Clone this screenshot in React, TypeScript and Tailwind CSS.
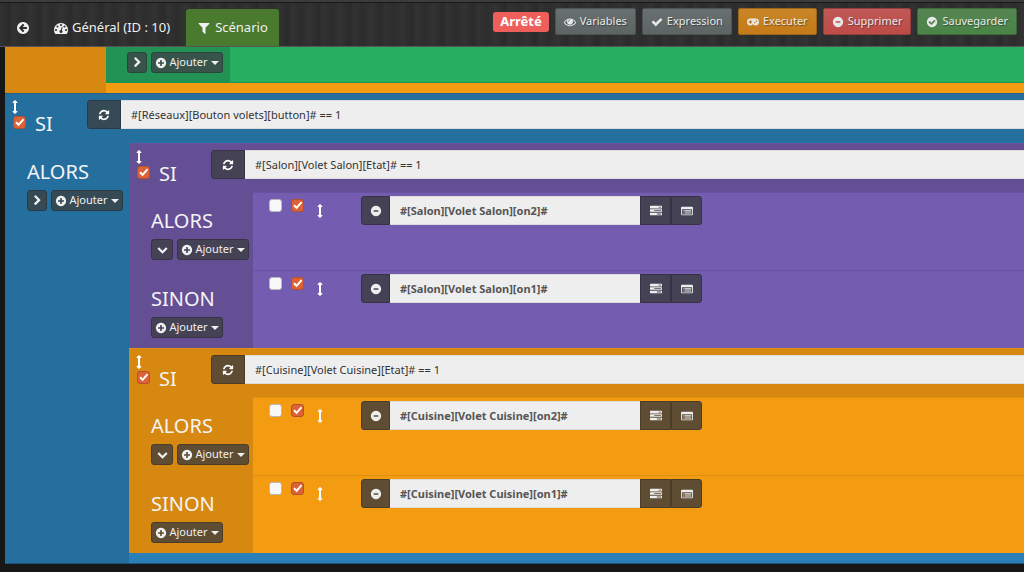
import React from 'react';

const DISC =
  'M1664 896q0 209-103 385.5t-279.5 279.5-385.5 103-385.5-103-279.5-279.5-103-385.5 103-385.5 279.5-279.5 385.5-103 385.5 103 279.5 279.5 103 385.5z';

const PATHS = {
  back: 'M1408 960v-128q0-26-19-45t-45-19h-502l189-189q19-19 19-45t-19-45l-91-91q-18-18-45-18t-45 18l-362 362-91 91q-18 18-18 45t18 45l91 91 362 362q18 18 45 18t45-18l91-91q18-18 18-45t-18-45l-189-189h502q26 0 45-19t19-45z' + DISC,
  plus: 'M1344 960v-128q0-26-19-45t-45-19h-256v-256q0-26-19-45t-45-19h-128q-26 0-45 19t-19 45v256h-256q-26 0-45 19t-19 45v128q0 26 19 45t45 19h256v256q0 26 19 45t45 19h128q26 0 45-19t19-45v-256h256q26 0 45-19t19-45z' + DISC,
  minus: 'M1248 960v-128q0-26-19-45t-45-19h-576q-26 0-45 19t-19 45v128q0 26 19 45t45 19h576q26 0 45-19t19-45z' + DISC,
  ok: 'M1412 734q0-28-18-46l-91-90q-19-19-45-19t-45 19l-408 407-226-226q-19-19-45-19t-45 19l-91 90q-18 18-18 46 0 27 18 45l362 362q19 19 45 19 27 0 46-19l543-543q18-18 18-45z' + DISC,
  right: 'M1363 877l-742 742q-19 19-45 19t-45-19l-166-166q-19-19-19-45t19-45l531-531-531-531q-19-19-19-45t19-45l166-166q19-19 45-19t45 19l742 742q19 19 19 45t-19 45z',
  down: 'M1683 808l-742 741q-19 19-45 19t-45-19l-742-741q-19-19-19-45.5t19-45.5l166-165q19-19 45-19t45 19l531 531 531-531q19-19 45-19t45 19l166 165q19 19 19 45.5t-19 45.5z',
  filter: 'M1595 295q17 41-14 70l-493 493v742q0 42-39 59-13 5-25 5-27 0-45-19l-256-256q-19-19-19-45v-486l-493-493q-31-29-14-70 17-39 59-39h1280q42 0 59 39z',
  eye: 'M1664 960q-152-236-381-353 61 104 61 225 0 185-131.5 316.5t-316.5 131.5-316.5-131.5-131.5-316.5q0-121 61-225-229 117-381 353 133 205 333.5 326.5t434.5 121.5 434.5-121.5 333.5-326.5zm-720-384q0-20-14-34t-34-14q-125 0-214.5 89.5t-89.5 214.5q0 20 14 34t34 14 34-14 14-34q0-86 61-147t147-61q20 0 34-14t14-34zm848 384q0 34-20 69-140 230-376.5 368.5t-499.5 138.5-499.5-139-376.5-368q-20-35-20-69t20-69q140-229 376.5-368t499.5-139 499.5 139 376.5 368q20 35 20 69z',
  check: 'M1671 566q0 40-28 68l-724 724-136 136q-28 28-68 28t-68-28l-136-136-362-362q-28-28-28-68t28-68l136-136q28-28 68-28t68 28l294 295 656-657q28-28 68-28t68 28l136 136q28 28 28 68z',
  gauge: 'M384 1152q0-53-37.5-90.5t-90.5-37.5-90.5 37.5-37.5 90.5 37.5 90.5 90.5 37.5 90.5-37.5 37.5-90.5zm192-448q0-53-37.5-90.5t-90.5-37.5-90.5 37.5-37.5 90.5 37.5 90.5 90.5 37.5 90.5-37.5 37.5-90.5zm428 481l101-382q6-26-7.5-48.5t-38.5-29.5-48 6.5-30 39.5l-101 382q-60 5-107 43.5t-63 98.5q-20 77 20 146t117 89 146-20 89-117q16-60-6-117t-72-91zm660-33q0-53-37.5-90.5t-90.5-37.5-90.5 37.5-37.5 90.5 37.5 90.5 90.5 37.5 90.5-37.5 37.5-90.5zm-640-640q0-53-37.5-90.5t-90.5-37.5-90.5 37.5-37.5 90.5 37.5 90.5 90.5 37.5 90.5-37.5 37.5-90.5zm448 192q0-53-37.5-90.5t-90.5-37.5-90.5 37.5-37.5 90.5 37.5 90.5 90.5 37.5 90.5-37.5 37.5-90.5zm320 448q0 261-141 483-19 29-54 29h-1402q-35 0-54-29-141-221-141-483 0-182 71-348t191-286 286-191 348-71 348 71 286 191 191 286 71 348z',
  pad: 'M512 384H1280a512 512 0 0 1 0 1024q-190 0-330-128H842q-140 128-330 128a512 512 0 0 1 0-1024zM416 640v160H256v192h160v160h192V992h160V800H608V640zM1160 880a120 120 0 1 0 0 240 120 120 0 1 0 0-240zM1400 640a120 120 0 1 0 0 240 120 120 0 1 0 0-240z',
  refresh: 'M1639 1056q0 5-1 7-64 268-268 434.5t-478 166.5q-146 0-282.5-55t-243.5-157l-129 129q-19 19-45 19t-45-19-19-45v-448q0-26 19-45t45-19h448q26 0 45 19t19 45-19 45l-137 137q71 66 161 102t187 36q134 0 250-65t186-179q11-17 53-117 8-23 30-23h192q13 0 22.5 9.5t9.5 22.5zm25-800v448q0 26-19 45t-45 19h-448q-26 0-45-19t-19-45 19-45l138-138q-148-137-349-137-134 0-250 65t-186 179q-11 17-53 117-8 23-30 23h-199q-13 0-22.5-9.5t-9.5-22.5v-7q65-268 270-434.5t480-166.5q146 0 284 55.5t245 156.5l130-129q19-19 45-19t45 19 19 45z',
  move: 'M1216 320q0 26-19 45t-45 19h-128v1024h128q26 0 45 19t19 45-19 45l-256 256q-19 19-45 19t-45-19l-256-256q-19-19-19-45t19-45 45-19h128v-1024h-128q-26 0-45-19t-19-45 19-45l256-256q19-19 45-19t45 19l256 256q19 19 19 45z',
  tasks: 'M1024 1408h640v-128h-640v128zm-384-512h1024v-128h-1024v128zm640-512h384v-128h-384v128zm512 832v256q0 26-19 45t-45 19h-1664q-26 0-45-19t-19-45v-256q0-26 19-45t45-19h1664q26 0 45 19t19 45zm0-512v256q0 26-19 45t-45 19h-1664q-26 0-45-19t-19-45v-256q0-26 19-45t45-19h1664q26 0 45 19t19 45zm0-512v256q0 26-19 45t-45 19h-1664q-26 0-45-19t-19-45v-256q0-26 19-45t45-19h1664q26 0 45 19t19 45z',
  list: 'M160 256H1632q160 0 160 160V1376q0 160-160 160H160Q0 1536 0 1376V416Q0 256 160 256zM128 640V1376q0 32 32 32H1632q32 0 32-32V640zM256 768H384V896H256zM512 768H1536V896H512zM256 960H384V1088H256zM512 960H1536V1088H512zM256 1152H384V1280H256zM512 1152H1536V1280H512z',
};

function Icon({ name, className = 'size-3' }: { name: keyof typeof PATHS; className?: string }) {
  return (
    <svg viewBox="0 0 1792 1792" fill="currentColor" fillRule="evenodd" aria-hidden="true" className={`shrink-0 ${className}`}>
      <path d={PATHS[name]} />
    </svg>
  );
}

type Theme = { dark: string; bright: string; button: string; line: string };

const GREEN: Theme = { dark: 'bg-[#239355]', bright: 'bg-[#27ae60]', button: 'bg-[#37534a] border-[#2a453b]', line: 'border-[#239355]' };
const BLUE: Theme = { dark: 'bg-[#256f9f]', bright: 'bg-[#2980b9]', button: 'bg-[#364a56] border-[#293a45]', line: 'border-[#215f88]' };
const PURPLE: Theme = { dark: 'bg-[#644f94]', bright: 'bg-[#745cb0]', button: 'bg-[#464256] border-[#373344]', line: 'border-[#6853a0]' };
const ORANGE: Theme = { dark: 'bg-[#d68811]', bright: 'bg-[#f39c12]', button: 'bg-[#5e4d33] border-[#4a3c27]', line: 'border-[#e08f11]' };

function Tick({ label, checked = false }: { label: string; checked?: boolean }) {
  return (
    <span className="grid size-[13px] shrink-0">
      <input
        type="checkbox"
        aria-label={label}
        defaultChecked={checked}
        className="peer col-start-1 row-start-1 size-[13px] appearance-none rounded-[3px] border border-[#b9b9b9] bg-[#f8f8f8] checked:border-[#b5502c] checked:bg-[#dd6336]"
      />
      <svg viewBox="0 0 13 13" className="pointer-events-none col-start-1 row-start-1 hidden size-[13px] peer-checked:block" fill="none" stroke="#fff" strokeWidth="2">
        <path d="M3 6.2 5.6 8.8 10.6 3.2" />
      </svg>
    </span>
  );
}

function AddBar({ theme, chevron }: { theme: Theme; chevron?: 'right' | 'down' }) {
  return (
    <div className="flex gap-1 text-[11px] text-[#f0f0f0]">
      {chevron && (
        <button
          type="button"
          aria-label="Replier"
          className={`flex h-[21px] items-center justify-center rounded-[3px] border ${chevron === 'down' ? 'w-[22px]' : 'w-5'} ${theme.button}`}
        >
          <Icon name={chevron} className="size-[11px]" />
        </button>
      )}
      <button type="button" className={`flex h-[21px] w-[72px] items-center justify-center gap-[2px] rounded-[3px] border ${theme.button}`}>
        <Icon name="plus" />
        <span>Ajouter</span>
        <svg viewBox="0 0 8 4" className="ml-[1px] h-1 w-2" fill="currentColor" aria-hidden="true">
          <path d="M0 0h8L4 4z" />
        </svg>
      </button>
    </div>
  );
}

function Branch({ title, theme, chevron }: { title: string; theme: Theme; chevron?: 'right' | 'down' }) {
  return (
    <div className={`w-[124px] shrink-0 pt-[15px] pl-[22px] ${theme.dark}`}>
      <h3 className="mb-1 text-xl leading-7 text-[#f4f4f4]">{title}</h3>
      <AddBar theme={theme} chevron={chevron} />
    </div>
  );
}

function ConditionHeader({ value, theme }: { value: string; theme: Theme }) {
  return (
    <div className={`flex h-[49px] items-start border-t pt-[6px] ${theme.dark} ${theme.line}`}>
      <div className="flex w-[82px] shrink-0 pl-2">
        <div className="flex w-[14px] flex-col items-start gap-[2px]">
          <Icon name="move" className="-ml-[5px] size-[14px] text-white" />
          <Tick label="Activer la condition" checked />
        </div>
        <span className="pt-[10px] pl-2 text-xl leading-7 text-[#f4f4f4]">SI</span>
      </div>
      <button type="button" aria-label="Actualiser" className={`flex h-[29px] w-[34px] shrink-0 items-center justify-center rounded-l-[3px] border text-white ${theme.button}`}>
        <Icon name="refresh" />
      </button>
      <input aria-label="Condition" defaultValue={value} className="h-[29px] min-w-0 flex-1 border-y border-[#dcdcdc] bg-[#eee] px-[10px] text-[11px] text-[#333]" />
    </div>
  );
}

function ActionRow({ value, title, theme, chevron }: { value: string; title: string; theme: Theme; chevron?: 'down' }) {
  const side = `flex h-[29px] items-center justify-center border text-[#eee] ${theme.button}`;
  return (
    <div className="flex h-[78px]">
      <Branch title={title} theme={theme} chevron={chevron} />
      <div className={`flex min-w-0 flex-1 items-start border-t pl-4 ${theme.line}`}>
        <div className="flex gap-[9px] pt-[6px]">
          <Tick label="Parallèle" />
          <Tick label="Activer" checked />
        </div>
        <Icon name="move" className="mt-[11px] ml-[9px] size-[14px] text-white" />
        <div className="ml-[34px] flex pt-[3px]">
          <button type="button" aria-label="Retirer" className={`${side} w-[29px] rounded-l-[3px]`}>
            <Icon name="minus" />
          </button>
          <input aria-label="Commande" defaultValue={value} className="h-[29px] w-[250px] border-y border-[#dcdcdc] bg-[#eee] px-[10px] text-[11px] font-bold text-[#555]" />
          <button type="button" aria-label="Choisir une action" className={`${side} w-[31px]`}>
            <Icon name="tasks" />
          </button>
          <button type="button" aria-label="Choisir une commande" className={`${side} w-[31px] rounded-r-[3px]`}>
            <Icon name="list" />
          </button>
        </div>
      </div>
    </div>
  );
}

function ShutterBlock({ room, theme }: { room: string; theme: Theme }) {
  return (
    <section className={theme.bright}>
      <ConditionHeader value={`#[${room}][Volet ${room}][Etat]# == 1`} theme={theme} />
      <ActionRow title="ALORS" value={`#[${room}][Volet ${room}][on2]#`} theme={theme} chevron="down" />
      <ActionRow title="SINON" value={`#[${room}][Volet ${room}][on1]#`} theme={theme} />
    </section>
  );
}

const TOOLS: { label: string; icon: keyof typeof PATHS; color: string }[] = [
  { label: 'Variables', icon: 'eye', color: 'from-[#697070] to-[#5d6464] border-[#4d5353]' },
  { label: 'Expression', icon: 'check', color: 'from-[#697070] to-[#5d6464] border-[#4d5353]' },
  { label: 'Executer', icon: 'pad', color: 'from-[#c98526] to-[#c47b18] border-[#9d6518]' },
  { label: 'Supprimer', icon: 'minus', color: 'from-[#bf5957] to-[#be4b48] border-[#963e3c]' },
  { label: 'Sauvegarder', icon: 'ok', color: 'from-[#568553] to-[#4a8446] border-[#3d6a3a]' },
];

export default function App() {
  return (
    <div className="min-h-screen overflow-x-hidden bg-[#171717] font-['Noto_Sans',sans-serif]">
      <header className="flex h-[47px] items-start justify-between border-b border-[#555] bg-[#2e2e2e] bg-[repeating-linear-gradient(90deg,#ffffff06_0px,#ffffff00_4px,#00000012_9px,#ffffff05_13px,#00000008_22px,#ffffff06_31px)] pr-[7px] shadow-[inset_0_2px_0_#3c3c3c,inset_0_3px_0_#181818]">
        <nav className="flex items-center pt-[9px] text-[13px] text-[#f0f0f0]">
          <a href="#retour" aria-label="Retour" className="flex h-[37px] items-center px-4">
            <Icon name="back" className="size-[14px]" />
          </a>
          <a href="#general" className="flex h-[37px] items-center gap-1 pr-4 pl-2">
            <Icon name="gauge" className="size-[14px]" />
            Général (ID : 10)
          </a>
          <a href="#scenario" className="flex h-[37px] items-center gap-1 rounded-t-[3px] bg-[#497a2e] px-[11px]">
            <Icon name="filter" className="size-[14px]" />
            Scénario
          </a>
        </nav>
        <div className="flex items-center gap-[6px] pt-2">
          <span className="flex h-5 items-center rounded-[3px] bg-[#ee5f5b] px-[7px] text-[13px] font-bold text-white">Arrêté</span>
          {TOOLS.map((t) => (
            <button
              key={t.label}
              type="button"
              className={`flex h-[27px] items-center gap-1 rounded-[2px] border bg-linear-to-b px-2 text-[11px] text-[#e8e8e8] text-shadow-[1px_1px_1px_#0006] ${t.color}`}
            >
              <Icon name={t.icon} />
              {t.label}
            </button>
          ))}
        </div>
      </header>

      <main className="ml-[5px]">
        <section className={`flex h-[46px] ${ORANGE.dark}`}>
          <div className="w-[101px] shrink-0" />
          <div className={`flex-1 pb-[10px] ${ORANGE.bright}`}>
            <div className={`flex h-9 border-b ${GREEN.bright} ${GREEN.line}`}>
              <div className={`w-[124px] pt-[5px] pl-[21px] ${GREEN.dark}`}>
                <AddBar theme={GREEN} chevron="right" />
              </div>
            </div>
          </div>
        </section>

        <section className={`border-b border-[#1d5478] ${BLUE.bright}`}>
          <div className={`pb-px ${BLUE.dark}`}>
            <ConditionHeader value="#[Réseaux][Bouton volets][button]# == 1" theme={BLUE} />
          </div>
          <div className="flex">
            <Branch title="ALORS" theme={BLUE} chevron="right" />
            <div className="min-w-0 flex-1 pb-[10px]">
              <ShutterBlock room="Salon" theme={PURPLE} />
              <ShutterBlock room="Cuisine" theme={ORANGE} />
            </div>
          </div>
        </section>
      </main>
    </div>
  );
}
